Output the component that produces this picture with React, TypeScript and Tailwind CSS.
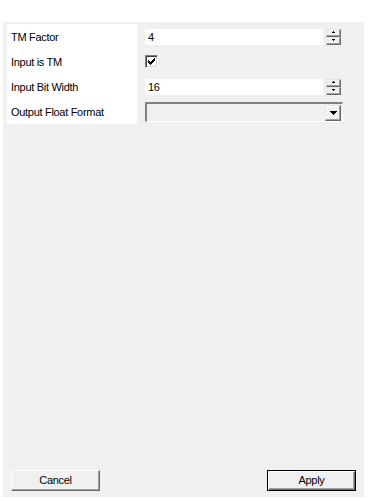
import React from "react";

const font = { fontFamily: '"Liberation Sans", Arial, sans-serif' };

function SpinButton({ dir }: { dir: "up" | "down" }) {
  return (
    <div className="flex h-[8px] w-[15px] items-center justify-center border-t border-l border-b border-r border-t-[#e3e3e3] border-l-[#e3e3e3] border-b-[#696969] border-r-[#696969] bg-[#f0f0f0] shadow-[inset_-1px_-1px_0_#a0a0a0]">
      <svg width="5" height="3" viewBox="0 0 5 3">
        {dir === "up" ? (
          <path d="M2 0h1v1h1v1H1V1h1z" fill="#000" />
        ) : (
          <path d="M1 0h3v1H3v1H2V1H1z" fill="#000" />
        )}
      </svg>
    </div>
  );
}

function NumericBox({ value }: { value: string }) {
  return (
    <div className="flex items-center gap-[3px]">
      <div className="flex h-[16px] w-[178px] items-center bg-white pl-[3px] pt-[1px] text-[11px] text-black">
        {value}
      </div>
      <div className="flex flex-col">
        <SpinButton dir="up" />
        <SpinButton dir="down" />
      </div>
    </div>
  );
}

const checkRows: [number, number, number][] = [
  [0, 6, 1],
  [1, 5, 2],
  [2, 0, 1],
  [2, 4, 3],
  [3, 0, 2],
  [3, 3, 3],
  [4, 0, 5],
  [5, 1, 3],
  [6, 2, 1],
];

export default function App() {
  return (
    <div className="h-[501px] w-[368px] bg-white pt-[22px] pl-[3px] pr-[4px]" style={font}>
      <div className="flex h-[475px] flex-col bg-[#f0f0f0] px-[4px] pt-[2px] pb-[6px] text-[11px] tracking-[-0.3px] text-black">
        <div className="grid grid-cols-[130px_1fr]">
          <div className="flex flex-col bg-white pl-[4px] pt-[1px]">
            <div className="flex h-[25px] items-center">TM Factor</div>
            <div className="flex h-[25px] items-center">Input is TM</div>
            <div className="flex h-[25px] items-center">Input Bit Width</div>
            <div className="flex h-[24px] items-center">Output Float Format</div>
          </div>
          <div className="flex flex-col pl-[8px]">
            <div className="flex h-[25px] items-center">
              <NumericBox value="4" />
            </div>
            <div className="flex h-[25px] items-center pb-[1px]">
              <div className="flex h-[13px] w-[13px] items-center justify-center border-t border-l border-b border-r border-t-[#808080] border-l-[#808080] border-b-white border-r-white bg-white shadow-[inset_1px_1px_0_#404040,inset_-1px_-1px_0_#d4d0c8]">
                <svg width="7" height="7" viewBox="0 0 7 7">
                  {checkRows.map(([y, x, w], i) => (
                    <rect key={i} x={x} y={y} width={w} height={1} fill="#000" />
                  ))}
                </svg>
              </div>
            </div>
            <div className="flex h-[25px] items-center">
              <NumericBox value="16" />
            </div>
            <div className="flex h-[25px] items-center pt-[1px]">
              <div className="flex h-[20px] w-[198px] items-center justify-end border-t-2 border-l-2 border-b border-r border-t-[#808080] border-l-[#808080] border-b-white border-r-white bg-[#f0f0f0] pr-[1px]">
                <div className="flex h-[16px] w-[16px] items-center justify-center border-t border-l border-b border-r border-t-[#e3e3e3] border-l-[#e3e3e3] border-b-[#696969] border-r-[#696969] bg-[#f0f0f0] shadow-[inset_-1px_-1px_0_#a0a0a0,inset_1px_1px_0_#ffffff]">
                  <svg width="7" height="4" viewBox="0 0 7 4">
                    <path d="M0 0h7v1H6v1H5v1H4v1H3V3H2V2H1V1H0z" fill="#000" />
                  </svg>
                </div>
              </div>
            </div>
          </div>
        </div>
        <div className="mt-auto flex items-end justify-between pl-[4px] pr-[4px]">
          <button className="flex h-[21px] w-[89px] items-center justify-center border-t border-l border-b border-r border-t-white border-l-white border-b-[#696969] border-r-[#696969] bg-[#f0f0f0] text-[11px] tracking-[-0.3px] shadow-[inset_-1px_-1px_0_#a0a0a0]" style={font}>
            Cancel
          </button>
          <button className="flex h-[21px] w-[89px] items-center justify-center border border-black bg-[#f0f0f0] text-[11px] tracking-[-0.3px] shadow-[inset_1px_1px_0_#ffffff,inset_-1px_-1px_0_#696969,inset_-2px_-2px_0_#a0a0a0]" style={font}>
            Apply
          </button>
        </div>
      </div>
    </div>
  );
}
